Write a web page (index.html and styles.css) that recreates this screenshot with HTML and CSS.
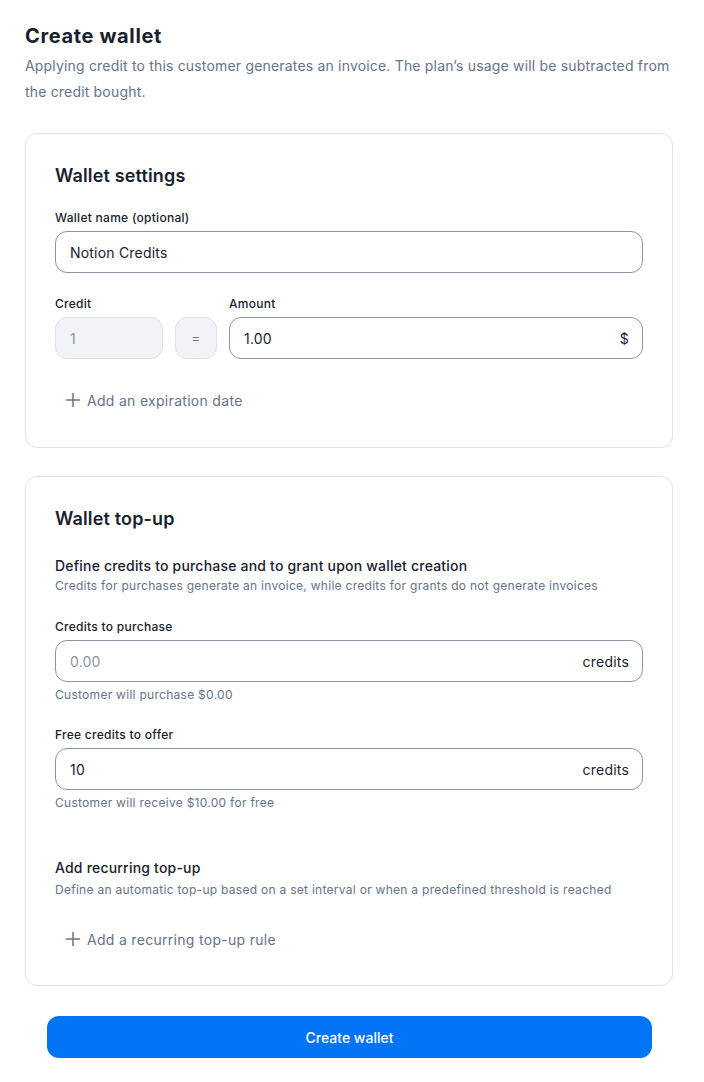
FILE: index.html
```html
<!DOCTYPE html>
<html lang="en">
<head>
<meta charset="utf-8">
<title>Create wallet</title>
<link rel="stylesheet" href="styles.css">
</head>
<body>
<main class="page">
  <header class="page-head">
    <h1 class="title">Create wallet</h1>
    <p class="subtitle">Applying credit to this customer generates an invoice. The plan’s usage will be subtracted from the credit bought.</p>
  </header>

  <section class="card card-settings">
    <h2 class="card-title">Wallet settings</h2>
    <div class="field field-name">
      <label class="label">Wallet name (optional)</label>
      <div class="input"><span class="value">Notion Credits</span></div>
    </div>
    <div class="rate-row">
      <div class="field field-credit">
        <label class="label">Credit</label>
        <div class="input input-disabled"><span class="value muted">1</span></div>
      </div>
      <div class="equals">=</div>
      <div class="field field-amount">
        <label class="label">Amount</label>
        <div class="input"><span class="value">1.00</span><span class="suffix">$</span></div>
      </div>
    </div>
    <button class="add-btn add-expiration" type="button">
      <svg width="16" height="16" viewBox="0 0 16 16" fill="none" stroke="currentColor" stroke-width="1.5" stroke-linecap="round"><path d="M8 1.5v13M1.5 8h13"/></svg>
      <span>Add an expiration date</span>
    </button>
  </section>

  <section class="card card-topup">
    <h2 class="card-title">Wallet top-up</h2>
    <div class="sub-head sub-define">
      <h3 class="sub-title">Define credits to purchase and to grant upon wallet creation</h3>
      <p class="sub-desc">Credits for purchases generate an invoice, while credits for grants do not generate invoices</p>
    </div>
    <div class="field field-purchase">
      <label class="label">Credits to purchase</label>
      <div class="input"><span class="value placeholder">0.00</span><span class="suffix">credits</span></div>
      <p class="helper">Customer will purchase $0.00</p>
    </div>
    <div class="field field-free">
      <label class="label">Free credits to offer</label>
      <div class="input"><span class="value">10</span><span class="suffix">credits</span></div>
      <p class="helper">Customer will receive $10.00 for free</p>
    </div>
    <div class="sub-head sub-recurring">
      <h3 class="sub-title">Add recurring top-up</h3>
      <p class="sub-desc">Define an automatic top-up based on a set interval or when a predefined threshold is reached</p>
    </div>
    <button class="add-btn add-recurring" type="button">
      <svg width="16" height="16" viewBox="0 0 16 16" fill="none" stroke="currentColor" stroke-width="1.5" stroke-linecap="round"><path d="M8 1.5v13M1.5 8h13"/></svg>
      <span>Add a recurring top-up rule</span>
    </button>
  </section>

  <div class="footer">
    <button class="primary" type="button">Create wallet</button>
  </div>
</main>
</body>
</html>
```

FILE: styles.css
```css
* { box-sizing: border-box; }
html, body { margin: 0; padding: 0; background: #fff; }
body {
  font-family: Inter, "Noto Sans", "Liberation Sans", sans-serif;
  font-optical-sizing: none;
  color: #19212e;
  letter-spacing: 0.2px;
  -webkit-font-smoothing: antialiased;
}
.page {
  padding: 22px 31px 0 25px;
  display: flex;
  flex-direction: column;
}
.page-head { margin-bottom: 28px; }
.title {
  margin: 0 0 3px;
  font-size: 20px;
  line-height: 28px;
  font-weight: 700;
  letter-spacing: 0.65px;
  color: #19212e;
}
.subtitle {
  margin: 0;
  font-size: 14px;
  line-height: 26px;
  letter-spacing: 0.18px;
  color: #66738a;
  font-weight: 400;
}
.card {
  border: 1px solid #dfe2ea;
  border-radius: 12px;
  padding: 29px 29px 30px 29px;
  display: flex;
  flex-direction: column;
}
.card-settings { margin-bottom: 28px; padding-bottom: 27px; }
.card-title {
  margin: 0 0 20px;
  font-size: 18px;
  line-height: 26px;
  font-weight: 600;
  letter-spacing: 0.15px;
  color: #19212e;
}
.field { display: flex; flex-direction: column; }
.label {
  font-size: 12px;
  line-height: 18px;
  font-weight: 500;
  letter-spacing: 0.28px;
  color: #19212e;
  margin-bottom: 4px;
}
.input {
  height: 42px;
  border: 1px solid #8c95a6;
  border-radius: 12px;
  padding: 0 13px 0 14px;
  display: flex;
  align-items: center;
  justify-content: space-between;
  font-size: 14px;
  color: #19212e;
}
.value { font-size: 14px; }
.muted { color: #8c95a6; }
.placeholder { color: #8c95a6; }
.suffix { font-size: 14px; color: #19212e; }
.input-disabled {
  background: #f2f3f6;
  border-color: #dfe2ea;
}
.field-name { margin-bottom: 22px; }
.rate-row {
  display: flex;
  align-items: flex-end;
  gap: 12px;
}
.field-credit { width: 108px; flex: none; }
.equals {
  width: 42px;
  height: 42px;
  flex: none;
  border: 1px solid #dfe2ea;
  background: #f2f3f6;
  border-radius: 12px;
  display: flex;
  align-items: center;
  justify-content: center;
  font-size: 13px;
  color: #66738a;
}
.field-amount { flex: 1; }
.add-btn {
  align-self: flex-start;
  background: none;
  border: none;
  padding: 0 10px;
  height: 40px;
  display: flex;
  align-items: center;
  gap: 6px;
  font-family: inherit;
  font-size: 14px;
  letter-spacing: 0.3px;
  color: #66738a;
  cursor: pointer;
}
.add-btn svg { flex: none; }
.add-expiration { margin-top: 21px; }
.sub-head { margin-bottom: 23px; }
.sub-define { margin-top: 4px; }
.sub-title {
  margin: 0;
  font-size: 14px;
  line-height: 20px;
  font-weight: 500;
  color: #19212e;
}
.sub-desc {
  margin: 1px 0 0;
  font-size: 12px;
  line-height: 18px;
  letter-spacing: 0.28px;
  color: #66738a;
}
.helper {
  margin: 4px 0 0;
  font-size: 12px;
  line-height: 18px;
  letter-spacing: 0.28px;
  color: #66738a;
}
.field-purchase { margin-bottom: 22px; }
.field-free { margin-bottom: 46px; }
.sub-recurring { margin-bottom: 20px; }
.sub-recurring .sub-desc { margin-top: 3px; }
.card-topup { padding-bottom: 26px; }
.footer {
  padding: 30px 21px 24px 22px;
}
.primary {
  width: 100%;
  height: 42px;
  border: none;
  border-radius: 12px;
  background: #0074f5;
  color: #fff;
  font-family: inherit;
  font-size: 14px;
  font-weight: 500;
  cursor: pointer;
}
```
